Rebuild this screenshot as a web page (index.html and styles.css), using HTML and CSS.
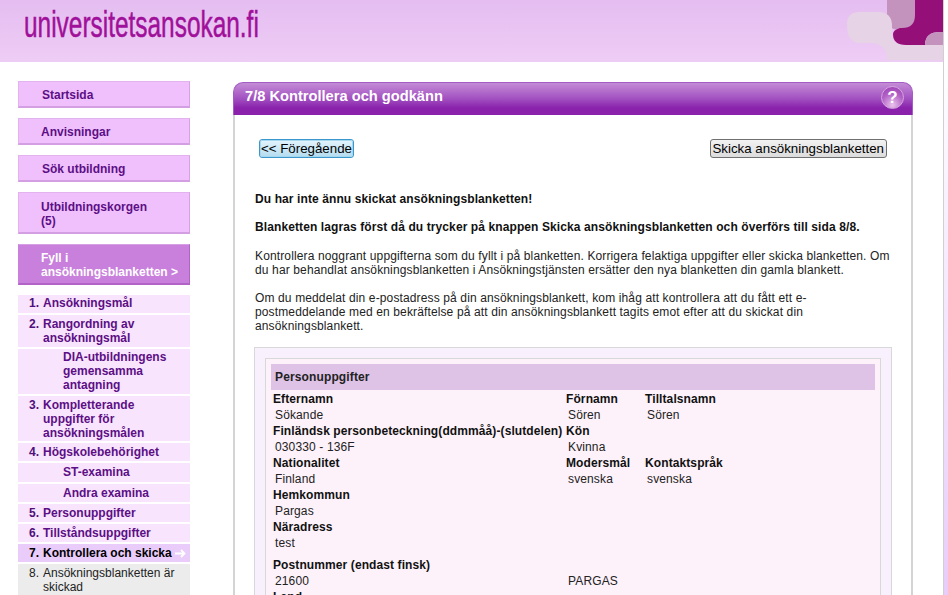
FILE: index.html
```html
<!DOCTYPE html>
<html lang="sv">
<head>
<meta charset="utf-8">
<title>universitetsansokan.fi</title>
<link rel="stylesheet" href="styles.css">
</head>
<body>
<header class="banner">
  <div class="logo">universitetsansokan.fi</div>
  <svg class="shapes" width="103" height="62" viewBox="0 0 103 62">
    <path d="M47 0V18Q47 30 60 30H80V0Z" fill="#c393bd"/>
    <path d="M7 24Q7 12 20 12H38Q52 12 52 26V33Q52 45 66 45H103V60H47Q47 43 30 43H20Q7 43 7 24Z" fill="#e6d4e6"/>
    <path d="M75 0V15Q75 28 62 28H60Q53 30 53 34Q53 45 66 45H85Q85 32 100 32H103V0Z" fill="#950f78"/>
    <path d="M85 45Q85 32 100 32H103V45Z" fill="#c393bd"/>
  </svg>
</header>
<div class="page">
  <nav class="side">
    <a class="tab tab-in">Startsida</a>
    <a class="tab">Anvisningar</a>
    <a class="tab tab-in">Sök utbildning</a>
    <a class="tab tab-two">Utbildningskorgen<br>(5)</a>
    <a class="tab tab-on">Fyll i<br>ansökningsblanketten &gt;</a>
    <ol class="steps">
      <li class="step step-a"><span class="n">1.</span><span>Ansökningsmål</span></li>
      <li class="step"><span class="n">2.</span><span>Rangordning av ansökningsmål</span></li>
      <li class="step sub step-b">DIA-utbildningens gemensamma antagning</li>
      <li class="step step-c"><span class="n">3.</span><span>Kompletterande uppgifter för ansökningsmålen</span></li>
      <li class="step"><span class="n">4.</span><span>Högskolebehörighet</span></li>
      <li class="step sub step-d">ST-examina</li>
      <li class="step sub">Andra examina</li>
      <li class="step"><span class="n">5.</span><span>Personuppgifter</span></li>
      <li class="step"><span class="n">6.</span><span>Tillståndsuppgifter</span></li>
      <li class="step step-on"><span class="n">7.</span><span>Kontrollera och skicka</span>
        <svg class="arrow" width="11" height="9" viewBox="0 0 11 9"><path d="M0 4.5H9.5M6 1L9.5 4.5L6 8" fill="none" stroke="#fff" stroke-width="1.8"/></svg>
      </li>
      <li class="step step-off"><span class="n">8.</span><span>Ansökningsblanketten är skickad</span></li>
    </ol>
  </nav>
  <main class="panel">
    <div class="panel-head">
      <h1>7/8 Kontrollera och godkänn</h1>
      <span class="help">?</span>
    </div>
    <div class="panel-body">
      <div class="buttons">
        <button class="btn btn-focus">&lt;&lt; Föregående</button>
        <button class="btn btn-send">Skicka ansökningsblanketten</button>
      </div>
      <p class="strong first">Du har inte ännu skickat ansökningsblanketten!</p>
      <p class="strong second">Blanketten lagras först då du trycker på knappen Skicka ansökningsblanketten och överförs till sida 8/8.</p>
      <p>Kontrollera noggrant uppgifterna som du fyllt i på blanketten. Korrigera felaktiga uppgifter eller skicka blanketten. Om du har behandlat ansökningsblanketten i Ansökningstjänsten ersätter den nya blanketten din gamla blankett.</p>
      <p>Om du meddelat din e-postadress på din ansökningsblankett, kom ihåg att kontrollera att du fått ett e-postmeddelande med en bekräftelse på att din ansökningsblankett tagits emot efter att du skickat din ansökningsblankett.</p>
      <section class="outer">
        <div class="inner">
          <h2>Personuppgifter</h2>
          <div class="grid">
            <b>Efternamn</b><b>Förnamn</b><b>Tilltalsnamn</b><i></i>
            <span class="v">Sökande</span><span class="v">Sören</span><span class="v">Sören</span><i></i>
            <b>Finländsk personbeteckning(ddmmåå)-(slutdelen)</b><b>Kön</b><b></b><i></i>
            <span class="v">030330 - 136F</span><span class="v">Kvinna</span><span></span><i></i>
            <b>Nationalitet</b><b>Modersmål</b><b>Kontaktspråk</b><i></i>
            <span class="v">Finland</span><span class="v">svenska</span><span class="v">svenska</span><i></i>
            <b>Hemkommun</b><b></b><b></b><i></i>
            <span class="v">Pargas</span><span></span><span></span><i></i>
            <b>Näradress</b><b></b><b></b><i></i>
            <span class="v gap">test</span><span></span><span></span><i></i>
            <b>Postnummer (endast finsk)</b><b></b><b></b><i></i>
            <span class="v">21600</span><span class="v">PARGAS</span><span></span><i></i>
            <b>Land</b><b></b><b></b><i></i>
          </div>
        </div>
      </section>
    </div>
  </main>
</div>
<div class="edge"></div>
</body>
</html>
```
FILE: styles.css
```css
* { box-sizing: border-box; }
html, body { margin: 0; height: 595px; overflow: hidden; background: #fff; }
body { font: 12px/14px "Liberation Sans", Arial, sans-serif; color: #222; position: relative; }
.banner { height: 62px; background: linear-gradient(#e5bdf1, #eecdf5); display: flex; justify-content: space-between; padding-right: 5px; overflow: hidden; }
.logo { font: 37px/50px "Liberation Sans", sans-serif; color: #a0109a; margin-left: 24px; transform: scaleX(.66); transform-origin: left center; -webkit-text-stroke: .5px #a0109a; white-space: nowrap; }
.shapes { flex: none; }
.page { display: flex; align-items: flex-start; padding: 19px 0 0 18px; gap: 43px; height: 533px; overflow: hidden; }
.side { width: 172px; flex: none; display: flex; flex-direction: column; }
.tab { display: block; background: #f0c0fc; border-style: solid; border-width: 1px 1px 2px 1px; border-color: #e3b3ef #d9a2e8 #d49fe2 #e3b3ef; color: #5c0f86; font-weight: 700; padding: 6px 4px 4px 22px; line-height: 14px; margin-bottom: 10px; }
.tab-in { padding-left: 23px; }
.tab-two { padding-top: 7px; }
.tab-on { background: #c97fdc; border-color: #d69ee3 #b263c8 #b263c8 #c97fdc; color: #fff; padding-right: 2px; }
.steps { list-style: none; margin: 0; padding: 0; display: flex; flex-direction: column; gap: 2px; }
.step { background: #f8e4fc; color: #5c0f86; font-weight: 700; padding: 2px 14px 2px 11px; display: flex; line-height: 14px; }
.step-a { padding-top: 1px; padding-bottom: 3px; }
.step-b { padding-top: 1px; }
.step-c { padding-bottom: 1px; }
.step-d { padding-bottom: 3px; }
.n { width: 14px; flex: none; color: #4f0e7a; }
.sub { padding-left: 45px; }
.step-on { background: #eaccfb; color: #000; position: relative; }
.step-on .n { color: #000; }
.arrow { position: absolute; right: 4px; top: 5px; }
.step-off { background: #ececec; color: #222; font-weight: 400; padding-bottom: 3px; }
.step-off .n { color: #222; }
.panel { width: 680px; flex: none; margin-top: 1px; }
.panel-head { height: 33px; border-radius: 10px 10px 0 0; background: linear-gradient(#c48cd6 0, #a14fc0 50%, #8a22ab 78%, #8a22ab); display: flex; justify-content: space-between; align-items: center; padding: 0 8px 0 11px; border-top: 1px solid #a55bc4; border-left: 1px solid #a55bc4; border-right: 1px solid #a55bc4; }
h1 { margin: 0 0 6px; font-size: 14.67px; line-height: 16px; color: #fff; font-weight: 700; }
.help { width: 23px; height: 23px; border-radius: 50%; background: radial-gradient(circle at 50% 85%, #eac4ec, #b261c6 55%, #9a3bb2); border: 1px solid #d5a7e0; color: #fff; font: 700 17px/21px "Liberation Sans", sans-serif; text-align: center; margin-top: -4px; }
.panel-body { border-left: 2px solid #d4d4d4; border-right: 2px solid #d4d4d4; padding: 24px 19px 0 20px; height: 500px; letter-spacing: .13px; }
.buttons { display: flex; justify-content: space-between; padding: 0 5px 0 4px; margin-bottom: 34px; letter-spacing: 0; }
.btn { font: 13.3px/15px "Liberation Sans", Arial, sans-serif; height: 19px; padding: 0 1px; border: 1px solid #707070; border-radius: 3px; background: linear-gradient(#f2f2f2, #dcdcdc); color: #000; }
.btn-send { padding: 0 2px; }
.btn-focus { border: 1px solid #3c98cc; outline: 1px solid #a5d8ee; outline-offset: -2px; background: linear-gradient(#e4f4fc, #b4dcf0); }
p { margin: 14px 0; }
p.first { margin-top: 0; }
p.second { margin-bottom: 15px; }
.strong { font-weight: 700; color: #111; letter-spacing: .1px; }
.outer { background: #f8f0fd; border: 1px solid #d8d8d8; padding: 10px; margin: 14px 0 0 -1px; height: 300px; }
.inner { background: #fdf1fa; border: 1px solid #d8d8d8; border-bottom: 0; padding: 5px 5px 0; height: 100%; }
h2 { margin: 0 0 1px; height: 26px; background: #dec3e7; font-size: 12px; line-height: 26px; padding-left: 4px; font-weight: 700; color: #222; }
.grid { display: grid; grid-template-columns: 293px 79px 90px 1fr; padding-left: 2px; line-height: 16px; }
.grid b { color: #111; letter-spacing: .1px; }
.v { padding-left: 2px; }
.gap { padding-bottom: 6px; }
.edge { position: absolute; right: 0; top: 0; width: 5px; height: 595px; background: linear-gradient(#fff 62px, #e8ccfa); border-left: 1px solid #d0d0d0; }
```
